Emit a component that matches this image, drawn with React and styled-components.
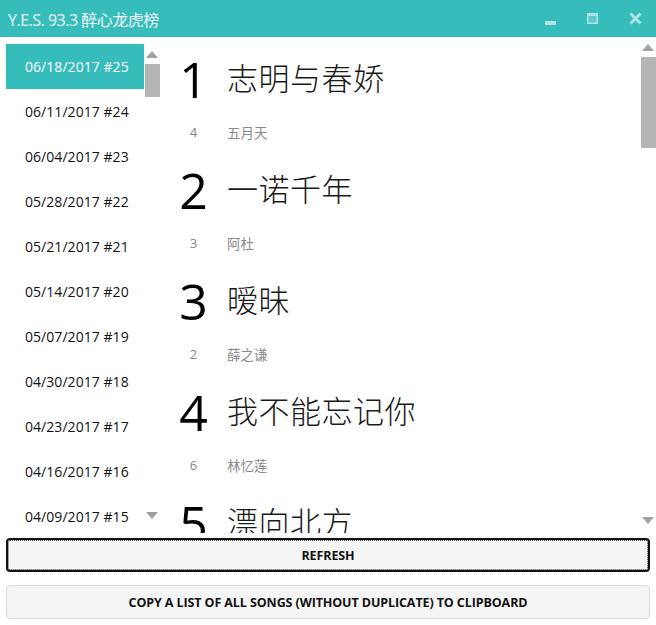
import React from "react";
import styled, { createGlobalStyle } from "styled-components";

const Global = createGlobalStyle`
  html, body { margin: 0; padding: 0; background: #fff; }
  body { font-family: "Open Sans", "Noto Sans CJK SC", sans-serif; }
  * { box-sizing: border-box; }
`;

const Window = styled.div`
  width: 656px;
  height: 625px;
  display: flex;
  flex-direction: column;
  background: #fff;
  overflow: hidden;
`;

const TitleBar = styled.div`
  height: 37px;
  flex: none;
  background: #37bcbc;
  display: flex;
  align-items: center;
  padding-left: 8px;
`;

const Title = styled.div`
  flex: 1;
  color: #eef9f9;
  font-family: "Open Sans", "Noto Sans CJK SC", sans-serif;
  font-size: 16px;
  letter-spacing: -0.5px;
`;

const Controls = styled.div`
  display: flex;
  align-items: center;
  height: 100%;
`;

const CtrlBtn = styled.div`
  width: 42px;
  height: 100%;
  display: flex;
  align-items: center;
  justify-content: center;
`;

const Main = styled.div`
  flex: 1;
  min-height: 0;
  display: flex;
`;

const LeftPane = styled.div`
  width: 160px;
  flex: none;
  display: flex;
  padding: 7px 0 0 6px;
`;

const DateList = styled.div`
  width: 138px;
  overflow: hidden;
  display: flex;
  flex-direction: column;
`;

const DateItem = styled.div`
  height: 45px;
  flex: none;
  display: flex;
  align-items: center;
  padding-left: 19px;
  font-family: "Open Sans", sans-serif;
  font-size: 14px;
  letter-spacing: 0.05px;
  color: ${(p) => (p.$active ? "#ffffff" : "#111")};
  background: ${(p) => (p.$active ? "#37bcbc" : "transparent")};
`;

const ScrollTrack = styled.div`
  width: 16px;
  flex: none;
  display: flex;
  flex-direction: column;
  align-items: center;
  padding-top: ${(p) => p.$top}px;
  padding-bottom: ${(p) => p.$bottom}px;
`;

const Arrow = styled.div`
  width: 0;
  height: 0;
  border-left: 6.5px solid transparent;
  border-right: 6.5px solid transparent;
  ${(p) =>
    p.$down
      ? "border-top: 7px solid #a0a0a0;"
      : "border-bottom: 7px solid #a0a0a0;"}
  flex: none;
`;

const Thumb = styled.div`
  width: 15px;
  height: ${(p) => p.$h}px;
  background: #b5b5b5;
  margin-top: 6px;
  flex: none;
`;

const Spacer = styled.div`
  flex: 1;
`;

const RightPane = styled.div`
  flex: 1;
  display: flex;
  min-width: 0;
`;

const SongList = styled.div`
  flex: 1;
  overflow: hidden;
  padding-top: 12px;
`;

const Entry = styled.div`
  display: flex;
  flex-direction: column;
  margin-bottom: 15px;
`;

const MainRow = styled.div`
  height: 62px;
  display: flex;
  align-items: center;
`;

const SubRow = styled.div`
  height: 22px;
  margin-top: 10px;
  margin-bottom: 2px;
  display: flex;
  align-items: center;
`;

const RankBig = styled.div`
  width: 67px;
  text-align: center;
  font-family: "Open Sans", sans-serif;
  font-size: 50px;
  line-height: 1;
  color: #000;
  margin-top: -2px;
`;

const SongTitle = styled.div`
  font-family: "Noto Sans CJK SC", sans-serif;
  font-weight: 300;
  font-size: 31px;
  line-height: 1;
  color: #1a1a1a;
  letter-spacing: 0.5px;
  margin-bottom: 8px;
`;

const RankSmall = styled.div`
  width: 67px;
  text-align: center;
  font-family: "Open Sans", sans-serif;
  font-size: 13px;
  color: #868690;
`;

const Artist = styled.div`
  font-family: "Noto Sans CJK SC", sans-serif;
  font-size: 13.5px;
  color: #8a8a8a;
`;

const Footer = styled.div`
  flex: none;
  display: flex;
  flex-direction: column;
  gap: 13px;
  padding: 5px 6px 6px 6px;
`;

const Button = styled.button`
  position: relative;
  height: 34px;
  width: 100%;
  background: #f5f5f5;
  border: ${(p) => (p.$focused ? "2px solid #111" : "1px solid #dcdcdc")};
  border-radius: 4px;
  font-family: "Open Sans", sans-serif;
  font-weight: 700;
  font-size: 12.5px;
  letter-spacing: -0.1px;
  color: #111;
  cursor: pointer;
  padding: 0;
  &::after {
    content: "";
    display: ${(p) => (p.$focused ? "block" : "none")};
    position: absolute;
    inset: 0;
    border: 1px dotted #444;
    border-radius: 2px;
  }
`;

const dates = [
  "06/18/2017 #25",
  "06/11/2017 #24",
  "06/04/2017 #23",
  "05/28/2017 #22",
  "05/21/2017 #21",
  "05/14/2017 #20",
  "05/07/2017 #19",
  "04/30/2017 #18",
  "04/23/2017 #17",
  "04/16/2017 #16",
  "04/09/2017 #15",
  "04/02/2017 #14",
];

const songs = [
  { rank: 1, title: "志明与春娇", prev: 4, artist: "五月天" },
  { rank: 2, title: "一诺千年", prev: 3, artist: "阿杜" },
  { rank: 3, title: "暧昧", prev: 2, artist: "薛之谦" },
  { rank: 4, title: "我不能忘记你", prev: 6, artist: "林忆莲" },
  { rank: 5, title: "漂向北方", prev: 1, artist: "黄明志" },
];

const IconColor = "#ade3e3";

export default function App() {
  return (
    <Window>
      <Global />
      <TitleBar>
        <Title>Y.E.S. 93.3 醉心龙虎榜</Title>
        <Controls>
          <CtrlBtn>
            <svg width="12" height="12" viewBox="0 0 12 12">
              <rect x="0" y="8" width="11" height="4" fill={IconColor} />
            </svg>
          </CtrlBtn>
          <CtrlBtn>
            <svg width="12" height="12" viewBox="0 0 12 12">
              <rect x="0" y="0" width="11" height="11" fill={IconColor} />
              <rect x="1.5" y="3" width="8" height="6.5" fill="#5ccaca" />
            </svg>
          </CtrlBtn>
          <CtrlBtn>
            <svg width="13" height="13" viewBox="0 0 13 13">
              <path
                d="M1.5 1.5 L11.5 11.5 M11.5 1.5 L1.5 11.5"
                stroke={IconColor}
                strokeWidth="3"
              />
            </svg>
          </CtrlBtn>
        </Controls>
      </TitleBar>
      <Main>
        <LeftPane>
          <DateList>
            {dates.map((d, i) => (
              <DateItem key={d} $active={i === 0}>
                {d}
              </DateItem>
            ))}
          </DateList>
          <ScrollTrack $top={7} $bottom={14}>
            <Arrow />
            <Thumb $h={33} />
            <Spacer />
            <Arrow $down />
          </ScrollTrack>
        </LeftPane>
        <RightPane>
          <SongList>
            {songs.map((s) => (
              <Entry key={s.rank}>
                <MainRow>
                  <RankBig>{s.rank}</RankBig>
                  <SongTitle>{s.title}</SongTitle>
                </MainRow>
                <SubRow>
                  <RankSmall>{s.prev}</RankSmall>
                  <Artist>{s.artist}</Artist>
                </SubRow>
              </Entry>
            ))}
          </SongList>
          <ScrollTrack $top={7} $bottom={9}>
            <Arrow />
            <Thumb $h={91} />
            <Spacer />
            <Arrow $down />
          </ScrollTrack>
        </RightPane>
      </Main>
      <Footer>
        <Button $focused>REFRESH</Button>
        <Button>COPY A LIST OF ALL SONGS (WITHOUT DUPLICATE) TO CLIPBOARD</Button>
      </Footer>
    </Window>
  );
}
